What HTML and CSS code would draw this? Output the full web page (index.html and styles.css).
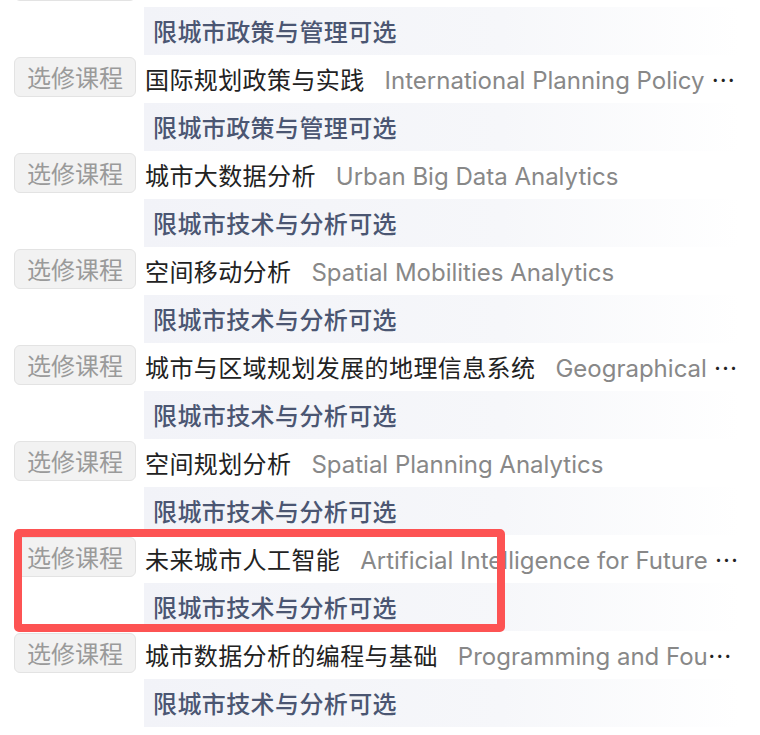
FILE: index.html
```html
<!DOCTYPE html>
<html lang="zh-CN">
<head>
	<meta charset="UTF-8">
	<title>选修课程</title>
	<link rel="stylesheet" href="styles.css">
</head>
<body>
	<div class="list">
		<div class="course">
			<div class="line">
				<span class="tag">选修课程</span>
				<div class="title">城市政策分析</div>
			</div>
			<div class="note">限城市政策与管理可选</div>
		</div>
		<div class="course">
			<div class="line">
				<span class="tag">选修课程</span>
				<div class="title">国际规划政策与实践<span class="en">International Planning Policy and Practice</span></div>
			</div>
			<div class="note">限城市政策与管理可选</div>
		</div>
		<div class="course">
			<div class="line">
				<span class="tag">选修课程</span>
				<div class="title">城市大数据分析<span class="en">Urban Big Data Analytics</span></div>
			</div>
			<div class="note">限城市技术与分析可选</div>
		</div>
		<div class="course">
			<div class="line">
				<span class="tag">选修课程</span>
				<div class="title">空间移动分析<span class="en">Spatial Mobilities Analytics</span></div>
			</div>
			<div class="note">限城市技术与分析可选</div>
		</div>
		<div class="course">
			<div class="line">
				<span class="tag">选修课程</span>
				<div class="title">城市与区域规划发展的地理信息系统<span class="en">Geographical Information Systems for Urban and Regional Planning</span></div>
			</div>
			<div class="note">限城市技术与分析可选</div>
		</div>
		<div class="course">
			<div class="line">
				<span class="tag">选修课程</span>
				<div class="title">空间规划分析<span class="en">Spatial Planning Analytics</span></div>
			</div>
			<div class="note">限城市技术与分析可选</div>
		</div>
		<div class="course marked">
			<div class="line">
				<span class="tag">选修课程</span>
				<div class="title">未来城市人工智能<span class="en">Artificial Intelligence for Future Cities</span></div>
			</div>
			<div class="note">限城市技术与分析可选</div>
		</div>
		<div class="course">
			<div class="line">
				<span class="tag">选修课程</span>
				<div class="title">城市数据分析的编程与基础<span class="en">Programming and Foundations for Urban Data Analytics</span></div>
			</div>
			<div class="note">限城市技术与分析可选</div>
		</div>
	</div>
</body>
</html>
```

FILE: styles.css
```css
html,
body{
	margin: 0;
	padding: 0;
	background: #fff;
	overflow: hidden;
}
body{
	font-family: "Noto Sans CJK SC", "Liberation Sans", sans-serif;
	font-size: 24px;
}
.list{
	margin-top: -41px;
	padding: 0 20px 0 14px;
}
.course{
	position: relative;
}
.line{
	display: flex;
	align-items: center;
	height: 48px;
}
.tag{
	flex: none;
	width: 122px;
	height: 40px;
	line-height: 38px;
	box-sizing: border-box;
	border: 1px solid #e3e3e3;
	border-radius: 6px;
	background-color: #f2f2f2;
	color: #9a9a9a;
	text-align: center;
	margin-right: 9px;
	margin-bottom: 4px;
}
.title{
	flex: 1;
	min-width: 0;
	color: #222;
	letter-spacing: 0.4px;
	white-space: nowrap;
	overflow: hidden;
	text-overflow: ellipsis;
	padding-bottom: 2px;
}
.en{
	margin-left: 20px;
	color: #888;
	letter-spacing: 0;
	font-family: Inter, "Liberation Sans", sans-serif;
}
.note{
	margin-left: 130px;
	height: 48px;
	line-height: 48px;
	padding-left: 9px;
	font-weight: 500;
	letter-spacing: 0.4px;
	color: #4b5672;
	background: linear-gradient(90deg, #f2f3f8 0%, #f6f7fa 60%, #fff 100%);
}
.course.marked::after{
	content: "";
	position: absolute;
	left: 0;
	top: -6px;
	width: 491px;
	height: 103px;
	box-sizing: border-box;
	border: 8px solid #fd5353;
	border-radius: 5px;
}
```
